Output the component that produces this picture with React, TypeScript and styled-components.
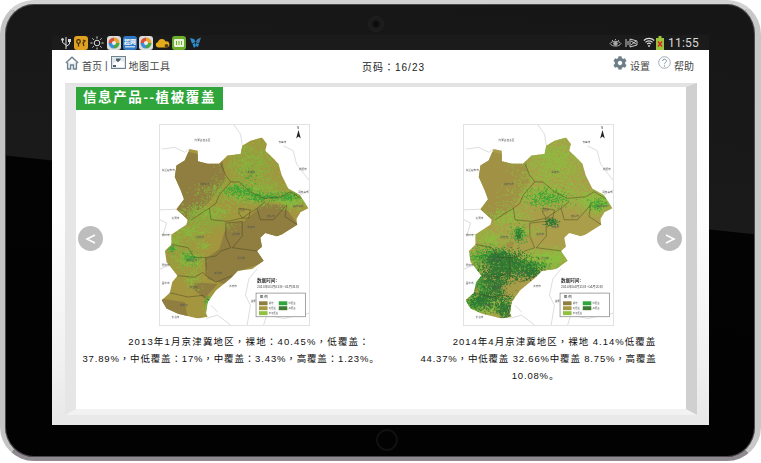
import React from "react";
import styled, { createGlobalStyle } from "styled-components";
import { FaCog } from "react-icons/fa";

const GlobalStyle = createGlobalStyle`
  html, body { margin: 0; padding: 0; background: #fff; }
  body { font-family: "Liberation Sans", "Noto Sans CJK SC", sans-serif; }
`;

const CJK = `"Liberation Sans", "Noto Sans CJK TC", sans-serif`;

const Page = styled.div`
  width: 761px;
  height: 463px;
  overflow: hidden;
  background: #fff;
`;

const Tablet = styled.div`
  position: relative;
  box-sizing: border-box;
  width: 761px;
  height: 461px;
  padding: 31px 46px 32px 47px;
  border-style: solid;
  border-width: 4px 6px 4px 5px;
  border-color: #d2d2d2 #c8c8c8 #8f8a90 #c4c4c4;
  border-radius: 34px;
  background: linear-gradient(186deg, #161616 0, #1a1a1a 43.2%, #030303 43.4%, #020202 100%);
  box-shadow: inset 0 0 0 1px #4a4a4a;
`;

const Camera = styled.div`
  position: absolute;
  top: 12px;
  left: 363px;
  width: 14px;
  height: 14px;
  border-radius: 50%;
  background: radial-gradient(circle, #0d0d0d 0, #0d0d0d 3px, #1c1c1c 4px);
  border: 1px solid #212121;
`;

const HomeKey = styled.div`
  position: absolute;
  bottom: 6px;
  left: 371px;
  width: 18px;
  height: 18px;
  border-radius: 50%;
  border: 2px solid #101010;
`;

const Screen = styled.div`
  display: flex;
  flex-direction: column;
  width: 657px;
  height: 390px;
  background: #fff;
`;

const StatusBar = styled.div`
  display: flex;
  align-items: center;
  justify-content: space-between;
  height: 15px;
  padding: 0 10px 0 8px;
  background: #1b1b1b;
`;

const IconRow = styled.div`
  display: flex;
  align-items: center;
  gap: 2.2px;
`;

const StatusRight = styled.div`
  display: flex;
  align-items: center;
`;

const StatusSlot = styled.span<{ $gap: number }>`
  display: flex;
  margin-right: ${(p) => p.$gap}px;
`;

const Clock = styled.span`
  color: #d8d8d8;
  font: 12px Roboto, sans-serif;
  letter-spacing: 0.2px;
`;

const NavBar = styled.div`
  display: grid;
  grid-template-columns: 1fr auto 1fr;
  align-items: center;
  height: 33px;
  padding: 0 15px 8px 13px;
  box-sizing: border-box;
  color: #444;
  font: 10px ${CJK};
`;

const NavGroup = styled.div<{ $end?: boolean }>`
  display: flex;
  align-items: center;
  justify-content: ${(p) => (p.$end ? "flex-end" : "flex-start")};
  gap: 3px;
`;

const NavText = styled.span<{ $gap?: number; $space?: number }>`
  margin-right: ${(p) => p.$gap ?? 0}px;
  padding-top: 5px;
  letter-spacing: ${(p) => p.$space ?? 0}px;
`;

const PageNo = styled.span`
  color: #222;
  letter-spacing: 1px;
  margin-left: 28px;
  padding-top: 8px;
`;

const Stage = styled.div`
  flex: 1;
  padding: 0 12px 10px 13px;
  background: linear-gradient(180deg, #ffffff 0, #fdfdfd 40%, #f1f1f1 80%, #e8e8e8 100%);
`;

const Frame = styled.div`
  position: relative;
  box-sizing: border-box;
  height: 332px;
  border-style: solid;
  border-width: 4px 11px 6px 11px;
  border-color: #e3e3e3 #d0d0d0 #f2f2f2 #e6e6e6;
  background: #fff;
`;

const Banner = styled.div`
  display: inline-block;
  height: 23px;
  padding: 0 7px;
  background: #2fa53b;
  color: #fff;
  font: bold 13.5px/22px ${CJK};
  letter-spacing: 1.6px;
`;

const Gallery = styled.div`
  display: grid;
  grid-template-columns: 310px 299px;
  padding-top: 14px;
`;

const Figure = styled.figure`
  display: flex;
  flex-direction: column;
  align-items: center;
  margin: 0;
`;

const MapBox = styled.svg`
  display: block;
  width: 151px;
  height: 202px;
  margin-left: 6px;
  border: 1px solid #e2e2e2;
  box-sizing: border-box;
  background: #fff;
  filter: blur(0.5px);
`;

const Caption = styled.figcaption<{ $shift?: number }>`
  margin-top: 7px;
  margin-left: ${(p) => p.$shift ?? 0}px;
  color: #111;
  font: 9.5px/17px ${CJK};
  white-space: nowrap;
  text-align: center;
`;

const Line = styled.div<{ $indent?: number; $trim?: number; $space: number }>`
  padding-left: ${(p) => p.$indent ?? 0}px;
  padding-right: ${(p) => p.$trim ?? 0}px;
  letter-spacing: ${(p) => p.$space}px;
`;

const FullStop = styled.span`
  font-family: "Noto Sans CJK SC", sans-serif;
`;

const Arrow = styled.div<{ $side: "left" | "right" }>`
  position: absolute;
  top: 139px;
  ${(p) => (p.$side === "left" ? "left: 2px;" : "right: 4px;")}
  display: flex;
  align-items: center;
  justify-content: center;
  width: 25px;
  height: 25px;
  border-radius: 50%;
  background: #bdbdbd;
`;

type Patch = [number, number, number, number, number, number?];

// seeded noise so the vegetation speckle stays the same on each render
const speckle = (seed: number, patches: Patch[]) => {
  let s = seed;
  const rnd = () => {
    s = (s * 16807) % 2147483647;
    return s / 2147483647;
  };
  let d = "";
  patches.forEach(([cx, cy, rx, ry, n, size = 3]) => {
    for (let i = 0; i < n; i++) {
      const a = rnd() * Math.PI * 2;
      // soft falloff, so patches fade out rather than end on an ellipse
      const r = Math.sqrt(-Math.log(rnd() * 0.98 + 0.02)) * 0.62;
      const x = cx + Math.cos(a) * r * rx;
      const y = cy + Math.sin(a) * r * ry;
      d += `M${x.toFixed(0)} ${y.toFixed(0)}h${size}v${size}h-${size}z`;
    }
  });
  return d;
};

const OUTLINE =
  "275,75 300,60 335,50 350,70 345,90 368,112 385,130 395,165 415,205 450,225 476,265 452,277 440,298 442,315 395,345 380,350 345,340 330,355 335,382 320,395 340,425 305,450 262,455 240,478 195,515 170,550 165,585 170,595 140,600 80,586 45,570 30,545 55,522 62,490 78,470 45,428 40,395 60,375 60,345 105,315 110,300 75,268 98,238 88,210 70,170 75,135 100,120 115,85 140,90 140,122 170,130 205,130 230,105 270,100";

const BORDERS = [
  "210,130 225,165 240,185 205,225 195,250 175,265 120,300",
  "240,185 265,185 300,215 340,235 395,230 420,215 455,235",
  "175,265 180,300 230,305 275,295 320,265 345,245",
  "320,265 330,300 370,300 410,255 405,290 442,315",
  "225,310 225,350 240,385 210,395 195,410 165,415 165,470 195,490 245,470",
  "225,310 275,305 275,350 245,385 320,395",
  "60,375 110,385 130,415 165,415",
  "78,470 130,475 155,460 165,470",
  "55,522 110,535 155,530 175,545",
  "265,265 300,270 295,295 275,295 265,280 265,265",
];

const NEIGHBOURS = [
  "250,12 270,40 275,75",
  "30,85 70,80 100,95 115,85",
  "25,270 75,268",
  "25,300 45,310 35,345 60,345",
  "400,75 430,90 440,130 478,180",
  "450,225 478,210",
  "25,450 50,440 45,428",
  "320,450 295,480 285,530 300,560 290,620",
  "165,600 200,590 240,620",
  "340,620 350,590 400,600 478,585",
  "180,560 200,580",
];

const PLACES: [number, number, string][] = [
  [130, 60, "内蒙古自治区"],
  [30, 152, "乌兰察布市"],
  [385, 66, "赤峰市"],
  [448, 148, "朝阳市"],
  [445, 218, "葫芦岛市"],
  [60, 298, "大同市"],
  [30, 348, "朔州市"],
  [30, 440, "阳泉市"],
  [30, 495, "晋中市"],
  [60, 600, "长治市"],
  [235, 505, "济南市"],
  [300, 550, "淄博市"],
  [145, 195, "张家口市"],
  [290, 158, "承德市"],
  [430, 262, "秦皇岛市"],
  [350, 292, "唐山市"],
  [268, 272, "北京"],
  [290, 326, "天津市"],
  [135, 355, "保定市"],
  [245, 347, "廊坊市"],
  [260, 418, "沧州市"],
  [190, 465, "衡水市"],
  [105, 427, "石家庄市"],
  [115, 507, "邢台市"],
  [85, 562, "邯郸市"],
];

const LegendSwatches = ({ top, second }: { top: string[]; second: string[] }) => (
  <g>
    <rect x="317" y="523" width="150" height="72" fill="#fff" stroke="#777" strokeWidth="2" />
    <text x="328" y="539" fontSize="11" fill="#333" fontFamily={CJK}>图 例</text>
    {top.map((c, i) => (
      <rect key={c} x="326" y={548 + i * 15} width="26" height="12" fill={c} />
    ))}
    {second.map((c, i) => (
      <rect key={c} x="386" y={548 + i * 15} width="26" height="12" fill={c} />
    ))}
    <text x="356" y="557" fontSize="7" fill="#555" fontFamily={CJK}>裸地</text>
    <text x="356" y="572" fontSize="7" fill="#555" fontFamily={CJK}>低覆盖</text>
    <text x="356" y="587" fontSize="7" fill="#555" fontFamily={CJK}>中低覆盖</text>
    <text x="416" y="557" fontSize="7" fill="#555" fontFamily={CJK}>中覆盖</text>
    <text x="416" y="572" fontSize="7" fill="#555" fontFamily={CJK}>高覆盖</text>
  </g>
);

type MapProps = {
  id: string;
  date: string;
  base: string;
  dark: string;
  areas: string[];
  layers: { color: string; seed: number; patches: Patch[] }[];
};

const VegetationMap = ({ id, date, base, dark, areas, layers }: MapProps) => (
  <MapBox viewBox="25 12 453 608">
    <defs>
      <clipPath id={id}>
        <polygon points={OUTLINE} />
      </clipPath>
    </defs>
    {NEIGHBOURS.map((p) => (
      <polyline key={p} points={p} fill="none" stroke="#bdbdbd" strokeWidth="1.6" />
    ))}
    <g clipPath={`url(#${id})`}>
      <rect x="0" y="0" width="500" height="640" fill={base} />
      {areas.map((a) => (
        <polygon key={a} points={a} fill={dark} />
      ))}
      {layers.map((l) => (
        <path key={l.color + l.seed} d={speckle(l.seed, l.patches)} fill={l.color} />
      ))}
    </g>
    {BORDERS.map((p) => (
      <polyline key={p} points={p} fill="none" stroke="#3c3a1e" strokeWidth="1.3" />
    ))}
    {PLACES.map(([x, y, t]) => (
      <text key={t} x={x} y={y} fontSize="8" fill="#555" fontFamily={CJK}>{t}</text>
    ))}
    <path d="M446 27l-7 26 7-6 7 6z" fill="#222" />
    <text x="442" y="25" fontSize="8" fill="#222" fontFamily={CJK}>N</text>
    <text x="320" y="488" fontSize="14" fontWeight="bold" fill="#333" fontFamily={CJK}>数据时间:</text>
    <text x="320" y="508" fontSize="10.5" fill="#444" fontFamily={CJK}>{date}</text>
    <LegendSwatches top={["#8f7e3f", "#a69a45", "#8fc03f"]} second={["#2fa53b", "#3f7a35"]} />
  </MapBox>
);

const MAP_2013: MapProps = {
  id: "map2013",
  date: "2013年01月01日~01月31日",
  base: "#a4963f",
  dark: "#8f7e40",
  areas: [
    "60,80 215,120 225,180 170,250 110,305 65,270",
    "230,310 280,305 340,250 400,255 445,315 380,360 340,430 270,455 220,495 170,480 160,420 205,390",
    "130,490 200,495 160,540 125,510",
    "30,540 100,550 110,600 40,590",
  ],
  layers: [
    {
      color: "#8aa83e",
      seed: 5,
      patches: [
        [300, 130, 100, 85, 1200],
        [300, 215, 160, 50, 1100],
        [160, 300, 100, 45, 800],
        [95, 400, 70, 85, 600],
      ],
    },
    {
      color: "#84bb3e",
      seed: 11,
      patches: [
        [300, 130, 90, 80, 380],
        [290, 215, 150, 42, 800],
        [425, 240, 60, 30, 450],
        [170, 275, 90, 32, 340],
        [115, 335, 60, 32, 220],
        [70, 365, 26, 32, 110],
        [115, 420, 50, 32, 280],
        [125, 480, 35, 40, 120],
        [170, 560, 16, 38, 90],
        [155, 378, 26, 14, 50],
      ],
    },
    {
      color: "#3ba236",
      seed: 29,
      patches: [
        [265, 210, 55, 20, 190],
        [335, 230, 70, 14, 220],
        [415, 228, 40, 14, 120],
        [60, 385, 16, 20, 40],
        [115, 415, 30, 24, 80],
        [172, 548, 14, 20, 45],
        [295, 160, 30, 30, 25],
      ],
    },
  ],
};

const MAP_2014: MapProps = {
  id: "map2014",
  date: "2014年04月11日~04月20日",
  base: "#aa9e4a",
  dark: "#a09145",
  areas: ["60,80 215,120 225,180 170,270 110,305 65,270", "155,368 175,368 172,395 150,392"],
  layers: [
    {
      color: "#8bbd3f",
      seed: 7,
      patches: [
        [295, 125, 120, 95, 1800],
        [430, 245, 70, 45, 800],
        [290, 225, 150, 50, 1200],
        [155, 290, 85, 38, 460],
        [100, 355, 75, 36, 460],
        [210, 335, 65, 26, 170],
        [300, 415, 70, 36, 700],
        [220, 425, 120, 45, 800],
        [60, 420, 34, 45, 220],
        [100, 560, 100, 45, 800],
      ],
    },
    {
      color: "#3ba236",
      seed: 43,
      patches: [
        [100, 410, 70, 34, 500],
        [70, 500, 42, 60, 520],
        [60, 550, 42, 26, 300],
        [280, 235, 80, 32, 300],
        [430, 250, 34, 20, 110],
        [190, 340, 30, 32, 140],
        [210, 440, 95, 28, 380],
      ],
    },
    {
      color: "#2f7733",
      seed: 71,
      patches: [
        [155, 440, 95, 48, 1300],
        [120, 500, 56, 68, 1000],
        [75, 545, 48, 34, 380],
        [145, 570, 30, 34, 380],
        [232, 455, 44, 28, 300],
        [290, 305, 24, 15, 120],
        [190, 345, 12, 20, 80],
        [130, 410, 50, 18, 260],
      ],
    },
    {
      color: "#a99c48",
      seed: 97,
      patches: [
        [168, 510, 28, 22, 260],
        [60, 520, 11, 14, 30],
      ],
    },
  ],
};

const Tile = styled.span<{ $bg: string }>`
  display: block;
  width: 14px;
  height: 14px;
  border-radius: 3px;
  background: ${(p) => p.$bg};
  overflow: hidden;
`;

const PieTile = () => (
  <Tile $bg="#dcdcdc">
    <svg width="14" height="14" viewBox="0 0 14 14">
      <path d="M7 7L7 1.5A5.5 5.5 0 0 1 12.5 7z" fill="#e8a32e" />
      <path d="M7 7L12.5 7A5.5 5.5 0 0 1 7 12.5z" fill="#49a842" />
      <path d="M7 7L7 12.5A5.5 5.5 0 0 1 1.5 7z" fill="#3f8fd6" />
      <path d="M7 7L1.5 7A5.5 5.5 0 0 1 7 1.5z" fill="#d8523a" />
      <circle cx="7" cy="7" r="2" fill="#eee" />
    </svg>
  </Tile>
);

const LeftStatusIcons = () => (
  <IconRow>
    <svg width="12" height="14" viewBox="0 0 12 14" fill="none" stroke="#ddd" strokeWidth="1">
      <path d="M6 1v12M6 9L2.5 6.5V4.5M6 10.5L9.5 8V5" />
      <rect x="8.5" y="3.5" width="2" height="2" fill="#ddd" />
      <circle cx="2.5" cy="3.5" r="1" fill="#ddd" />
    </svg>
    <Tile $bg="#e0a020">
      <svg width="14" height="14" viewBox="0 0 14 14" fill="none" stroke="#3a2a0a" strokeWidth="1.2">
        <circle cx="4.5" cy="5.5" r="1.8" />
        <path d="M4.5 7.5v3M9 4l2 1-2 2 1 3" />
      </svg>
    </Tile>
    <svg width="14" height="14" viewBox="0 0 14 14" fill="none" stroke="#ddd" strokeWidth="1">
      <circle cx="7" cy="7" r="2.8" />
      <path d="M7 0.5v2M7 11.5v2M0.5 7h2M11.5 7h2M2.4 2.4l1.4 1.4M10.2 10.2l1.4 1.4M2.4 11.6l1.4-1.4M10.2 3.8l1.4-1.4" />
    </svg>
    <PieTile />
    <Tile $bg="#2f79c4">
      <svg width="14" height="14" viewBox="0 0 14 14" fill="#fff">
        <text x="1" y="8" fontSize="6" fontWeight="bold" fontFamily={CJK}>超网</text>
        <rect x="2" y="10" width="10" height="1.5" opacity="0.7" />
      </svg>
    </Tile>
    <PieTile />
    <svg width="15" height="12" viewBox="0 0 15 12">
      <path d="M3 10.5A2.8 2.8 0 0 1 3 5a4 4 0 0 1 7.6-.6A3 3 0 0 1 12 10.5z" fill="#e4ab1c" />
      <circle cx="11.5" cy="8.8" r="1.9" fill="#5a4210" />
    </svg>
    <Tile $bg="#6aae2c">
      <svg width="14" height="14" viewBox="0 0 14 14">
        <rect x="2" y="3" width="10" height="8" rx="1" fill="#e9f3dc" />
        <path d="M4.5 5v4M7 5v4M9.5 5v4" stroke="#6aae2c" strokeWidth="1" />
      </svg>
    </Tile>
    <svg width="13" height="13" viewBox="0 0 13 13">
      <path d="M1 2l4 1 1.5 3L3 7.5z" fill="#2a8fd0" />
      <path d="M12 1.5L8.5 3 6.5 6l3.5 1.5z" fill="#3f7fb0" />
      <path d="M6 7l-2.5 1L5 12l2-2zM7 7l3 1-1 3-2-1z" fill="#2a8fd0" />
    </svg>
  </IconRow>
);

const RightStatusIcons = () => (
  <StatusRight>
    <StatusSlot $gap={3}>
      <svg width="13" height="10" viewBox="0 0 13 10" fill="none" stroke="#aaa" strokeWidth="1">
        <path d="M1 5.5C3 2.5 10 2.5 12 5.5 10 9 3 9 1 5.5z" />
        <circle cx="6.5" cy="5.5" r="1.8" fill="#aaa" />
        <path d="M3 2l1 1M6.5 1v1M10 2L9 3" />
      </svg>
    </StatusSlot>
    <StatusSlot $gap={5}>
      <svg width="13" height="10" viewBox="0 0 13 10" fill="none" stroke="#ddd" strokeWidth="0.9">
        <path d="M1 1v8M3 3v4M5 1l7 2v4L5 9z" />
        <path d="M6 3l5 3M6 7l5-4" />
      </svg>
    </StatusSlot>
    <StatusSlot $gap={1}>
      <svg width="12" height="11" viewBox="0 0 12 11" fill="none" stroke="#ddd" strokeWidth="1.1">
        <path d="M0.8 3.5a7.5 7.5 0 0 1 10.4 0M2.5 5.3a5 5 0 0 1 7 0M4.2 7a2.6 2.6 0 0 1 3.6 0" />
        <circle cx="6" cy="9" r="0.9" fill="#ddd" stroke="none" />
      </svg>
    </StatusSlot>
    <StatusSlot $gap={4}>
      <svg width="8" height="14" viewBox="0 0 8 14">
        <rect x="2.5" y="0" width="3" height="2" fill="#9cc43c" />
        <rect x="0" y="2" width="8" height="12" fill="#9cc43c" />
        <path d="M2 5.5l4 5M6 5.5l-4 5" stroke="#d9262c" strokeWidth="1.4" />
      </svg>
    </StatusSlot>
    <Clock>11:55</Clock>
  </StatusRight>
);

const HomeIcon = () => (
  <svg width="14" height="14" viewBox="0 0 14 14" fill="none" stroke="#6f8290" strokeWidth="1.4">
    <path d="M0.8 7L7 1.2 13.2 7" />
    <path d="M2.6 6.4V13h3V9h2.8v4h3V6.4" fill="#eef1f3" />
  </svg>
);

const MapToolIcon = () => (
  <svg width="15" height="14" viewBox="0 0 15 14">
    <rect x="0.5" y="0.5" width="14" height="12" fill="#dfe6ea" stroke="#6f8290" />
    <path d="M2 8l3-3 2 2 2-3 4 2v5H2z" fill="#fff" />
    <path d="M5 2.5h5l-1 2-2 1.5-2-1.5zM2 9h3v2H2z" fill="#4f5f6a" />
  </svg>
);

const HelpIcon = () => (
  <svg width="13" height="13" viewBox="0 0 13 13">
    <circle cx="6.5" cy="6.5" r="5.8" fill="#fff" stroke="#9aa6ae" strokeWidth="0.9" />
    <path d="M4.6 5a1.9 1.9 0 1 1 2.8 1.7c-.6.4-.9.7-.9 1.5" fill="none" stroke="#8a97a0" strokeWidth="1" />
    <circle cx="6.5" cy="10" r="0.7" fill="#8a97a0" />
  </svg>
);

const ArrowGlyph = ({ flip }: { flip?: boolean }) => (
  <svg width="12" height="12" viewBox="0 0 12 12" fill="none" stroke="#fff" strokeWidth="1.6">
    <path d={flip ? "M2 2l8 4-8 4" : "M10 2L2 6l8 4"} />
  </svg>
);

export default function App() {
  return (
    <Page>
      <GlobalStyle />
      <Tablet>
        <Camera />
        <HomeKey />
        <Screen>
          <StatusBar>
            <LeftStatusIcons />
            <RightStatusIcons />
          </StatusBar>
          <NavBar>
            <NavGroup>
              <HomeIcon />
              <NavText>首页</NavText>
              <NavText>|</NavText>
              <MapToolIcon />
              <NavText $space={0.5}>地图工具</NavText>
            </NavGroup>
            <PageNo>页码：16/23</PageNo>
            <NavGroup $end>
              <FaCog size={14} color="#6f7f8a" />
              <NavText $gap={5}>设置</NavText>
              <HelpIcon />
              <NavText>帮助</NavText>
            </NavGroup>
          </NavBar>
          <Stage>
            <Frame>
              <Banner>信息产品--植被覆盖</Banner>
              <Gallery>
                <Figure>
                  <VegetationMap {...MAP_2013} />
                  <Caption>
                    <Line $indent={36} $space={1.15}>2013年1月京津冀地区，裸地：40.45%，低覆盖：</Line>
                    <Line $space={0.85}>37.89%，中低覆盖：17%，中覆盖：3.43%，高覆盖：1.23%<FullStop>。</FullStop></Line>
                  </Caption>
                </Figure>
                <Figure>
                  <VegetationMap {...MAP_2014} />
                  <Caption $shift={6}>
                    <Line $indent={32} $space={1}>2014年4月京津冀地区，裸地 4.14%低覆盖</Line>
                    <Line $space={0.82}>44.37%，中低覆盖 32.66%中覆盖 8.75%，高覆盖</Line>
                    <Line $trim={6} $space={0.82}>10.08%<FullStop>。</FullStop></Line>
                  </Caption>
                </Figure>
              </Gallery>
              <Arrow $side="left"><ArrowGlyph /></Arrow>
              <Arrow $side="right"><ArrowGlyph flip /></Arrow>
            </Frame>
          </Stage>
        </Screen>
      </Tablet>
    </Page>
  );
}
